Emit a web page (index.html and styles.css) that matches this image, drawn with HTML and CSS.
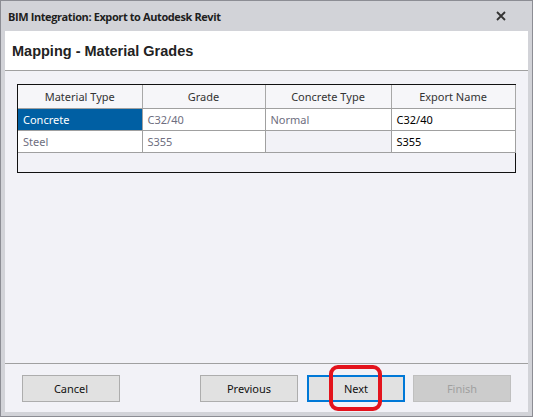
FILE: index.html
```html
<!DOCTYPE html>
<html>
<head>
<meta charset="utf-8">
<link rel="stylesheet" href="styles.css">
</head>
<body>
<div class="window">
  <div class="titlebar">
    <span class="title">BIM Integration: Export to Autodesk Revit</span>
    <span class="close">
      <svg width="10" height="10" viewBox="0 0 10 10"><path d="M1 1 L9 9 M9 1 L1 9" stroke="#333" stroke-width="1.8" fill="none"/></svg>
    </span>
  </div>
  <div class="client">
    <div class="header"><h1 class="heading">Mapping - Material Grades</h1></div>
    <div class="body">
      <div class="grid">
        <table class="tbl">
          <colgroup><col class="c1"><col class="c2"><col class="c3"><col class="c4"></colgroup>
          <thead>
            <tr><th>Material Type</th><th>Grade</th><th>Concrete Type</th><th>Export Name</th></tr>
          </thead>
          <tbody>
            <tr><td class="sel">Concrete</td><td class="ro">C32/40</td><td class="ro">Normal</td><td class="ed">C32/40</td></tr>
            <tr><td class="ro">Steel</td><td class="ro">S355</td><td class="empty"></td><td class="ed">S355</td></tr>
          </tbody>
        </table>
      </div>
    </div>
    <div class="footer">
      <button class="btn">Cancel</button>
      <button class="btn push">Previous</button>
      <button class="btn primary">Next<span class="mark"></span></button>
      <button class="btn disabled">Finish</button>
    </div>
  </div>
</div>
</body>
</html>
```

FILE: styles.css
```css
html, body { margin: 0; padding: 0; }
body { width: 533px; height: 417px; overflow: hidden; font-family: "Noto Sans", "Open Sans", sans-serif; }
.window {
  width: 533px; height: 417px; box-sizing: border-box;
  border: 1px solid #8c8d94;
  background: #d2d3d8;
  display: flex; flex-direction: column;
}
.titlebar {
  height: 30px; flex: none;
  display: flex; align-items: center;
  padding-left: 7px; padding-right: 26px;
  justify-content: space-between;
}
.title { font-family: "Open Sans", sans-serif; font-weight: 700; font-size: 11px; color: #1e1e1e; letter-spacing: -0.4px; }
.close { display: flex; align-items: center; }
.client {
  flex: 1; margin: 0 4px 4px 4px;
  background: #f2f2f7;
  display: flex; flex-direction: column;
}
.header {
  height: 39px; flex: none; background: #fff;
  border-bottom: 1px solid #a0a0a0;
  display: flex; align-items: center; padding-left: 7px;
}
.heading { margin: 0; font-family: "Liberation Sans", Arial, sans-serif; font-weight: 700; font-size: 14.5px; color: #222; }
.body { flex: 1; padding: 13px 12px 0 12px; }
.grid {
  height: 89px; box-sizing: border-box;
  border: 1px solid #111;
  background: #f2f2f7;
}
.tbl { border-collapse: collapse; table-layout: fixed; width: 497px; font-size: 11px; }
.c1 { width: 124px; } .c2 { width: 123px; } .c3 { width: 126px; } .c4 { width: 124px; }
.tbl th {
  height: 23px; box-sizing: border-box; padding: 0; font-weight: 400; color: #333;
  background: #f6f6f9; border-right: 1px solid #a8a8a8; border-bottom: 1px solid #a0a0a0;
}
.tbl td {
  height: 21px; padding: 0 5px; border-right: 1px solid #a0a0a0; border-bottom: 1px solid #a0a0a0;
  background: #fff; white-space: nowrap;
}
.tbl td.ro { color: #6e6e80; }
.tbl td.ed { color: #000; }
.tbl td.sel { background: #005fa3; color: #fff; }
.tbl td.empty { background: #f2f2f7; }
.footer {
  height: 49px; flex: none; box-sizing: border-box;
  border-top: 1px solid #a0a0a0;
  display: flex; align-items: flex-start; gap: 9px;
  padding: 11px 17px 0 17px;
}
.btn {
  width: 98px; height: 27px; box-sizing: border-box;
  background: #e1e1e1; border: 1px solid #adadad; border-radius: 0;
  font-family: "Noto Sans", "Open Sans", sans-serif; font-size: 11px; color: #111;
  padding: 0; position: relative;
}
.push { margin-left: auto; }
.primary { border: 2px solid #0078d7; }
.disabled { background: #cccccc; border-color: #bfbfbf; color: #a0a0a0; margin-left: -1px; }
.mark {
  position: absolute; left: 20px; top: -12px; width: 53px; height: 46px;
  box-sizing: border-box; border: 4px solid #e3131c; border-radius: 9px;
}
```
